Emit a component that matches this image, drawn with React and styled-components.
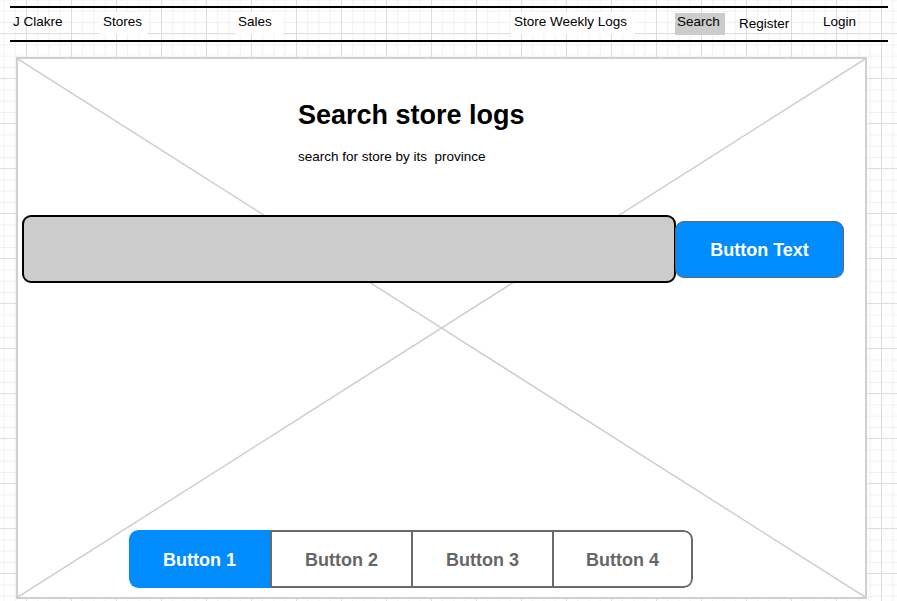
import React from "react";
import { styled, createGlobalStyle } from "styled-components";

const navItems = [
    { label: "J Clakre", col: 90 },
    { label: "Stores", col: 135, box: 47, fill: "#fff" },
    { label: "Sales", col: 276, box: 48, fill: "#fff" },
    { label: "Store Weekly Logs", col: 164, box: 124, fill: "#fff" },
    { label: "Search", col: 61, box: 50, fill: "#ccc", active: true },
    { label: "Register", col: 84, drop: true },
    { label: "Login", col: 0 },
];

const tabs = ["Button 1", "Button 2", "Button 3", "Button 4"];

function App() {
    return (
        <>
            <GlobalStyle />
            <NavBar $cols={navItems.map((n) => (n.col ? n.col + "px" : "1fr")).join(" ")}>
                {navItems.map((item) => (
                    <NavItem
                        key={item.label}
                        $box={item.box}
                        $fill={item.fill}
                        $active={item.active}
                        $drop={item.drop}
                    >
                        {item.label}
                    </NavItem>
                ))}
            </NavBar>
            <Frame>
                <Cross viewBox="0 0 847 538" preserveAspectRatio="none">
                    <line x1="0" y1="0" x2="847" y2="538" />
                    <line x1="847" y1="0" x2="0" y2="538" />
                </Cross>
                <Content>
                    <Title>Search store logs</Title>
                    <Subtitle>search for store by its&nbsp; province</Subtitle>
                    <SearchRow>
                        <SearchField />
                        <PrimaryButton>Button Text</PrimaryButton>
                    </SearchRow>
                    <Segmented>
                        {tabs.map((t, i) => (
                            <Segment key={t} $selected={i === 0}>
                                {t}
                            </Segment>
                        ))}
                    </Segmented>
                </Content>
            </Frame>
        </>
    );
}

export default App;

const GlobalStyle = createGlobalStyle`
    *, *::before, *::after { box-sizing: border-box; }
    html, body { height: 100%; }
    body {
        margin: 0;
        overflow: hidden;
        font-family: "Liberation Sans", Arial, sans-serif;
        background-color: #fff;
        background-image:
            linear-gradient(to right, #dddddd 1px, transparent 1px),
            linear-gradient(to bottom, #dddddd 1px, transparent 1px),
            linear-gradient(to right, #f0f0f0 1px, transparent 1px),
            linear-gradient(to bottom, #f0f0f0 1px, transparent 1px);
        background-size: 45px 45px, 45px 45px, 11.25px 11.25px, 11.25px 11.25px;
        background-position: 26px 33px, 26px 33px, 3.5px 10.75px, 3.5px 10.75px;
    }
`;

const NavBar = styled.nav`
    display: grid;
    grid-template-columns: ${(p) => p.$cols};
    width: 878px;
    height: 36px;
    margin: 6px 0 0 10px;
    border-top: 2px solid #000;
    border-bottom: 2px solid #000;
    align-items: start;
`;

const NavItem = styled.div`
    justify-self: start;
    width: ${(p) => (p.$box ? p.$box + "px" : "auto")};
    height: 22px;
    margin-top: ${(p) => (p.$active ? "5px" : p.$drop ? "6px" : "4px")};
    padding-left: ${(p) => (p.$active ? "2px" : "3px")};
    background: ${(p) => p.$fill || "transparent"};
    font-size: 13.5px;
    line-height: ${(p) => (p.$active ? "18px" : "20px")};
    color: #000;
    white-space: nowrap;
`;

const Frame = styled.section`
    position: relative;
    width: 851px;
    height: 542px;
    margin: 15px 0 0 16px;
    border: 2px solid #cfcfcf;
    background: #fff;
`;

const Cross = styled.svg`
    position: absolute;
    inset: 0;
    width: 100%;
    height: 100%;

    line {
        stroke: #cfcfcf;
        stroke-width: 1.5;
        vector-effect: non-scaling-stroke;
    }
`;

const Content = styled.div`
    position: relative;
    display: flex;
    flex-direction: column;
    height: 100%;
    padding: 41px 0 9px 0;
`;

const Title = styled.h1`
    margin: 0 0 0 280px;
    font-size: 27px;
    line-height: 31px;
    font-weight: bold;
    color: #000;
`;

const Subtitle = styled.p`
    margin: 18px 0 0 280px;
    font-size: 13.5px;
    line-height: 16px;
    color: #000;
`;

const SearchRow = styled.div`
    display: flex;
    align-items: center;
    margin: 50px 0 0 4px;
`;

const SearchField = styled.div`
    width: 654px;
    height: 68px;
    background: #cccccc;
    border: 2px solid #000;
    border-radius: 9px;
`;

const PrimaryButton = styled.button`
    width: 169px;
    height: 57px;
    margin-left: -1px;
    padding: 2px 0 0;
    background: #008cff;
    border: 1px solid #666;
    border-radius: 9px;
    color: #fff;
    font-family: inherit;
    font-size: 18px;
    font-weight: bold;
`;

const Segmented = styled.div`
    display: flex;
    width: 564px;
    height: 58px;
    margin: auto 0 0 111px;
    border-radius: 9px;
    overflow: hidden;
`;

const Segment = styled.div`
    flex: 0 0 25%;
    display: flex;
    align-items: center;
    justify-content: center;
    padding-top: 2px;
    background: ${(p) => (p.$selected ? "#008cff" : "#fff")};
    color: ${(p) => (p.$selected ? "#fff" : "#666")};
    font-size: 18px;
    font-weight: bold;
    border: ${(p) => (p.$selected ? "none" : "2px solid #6a6a6a")};
    border-right: none;

    &:last-child {
        border-right: 2px solid #6a6a6a;
        border-radius: 0 9px 9px 0;
    }

    &:first-child {
        border-radius: 9px 0 0 9px;
    }
`;
